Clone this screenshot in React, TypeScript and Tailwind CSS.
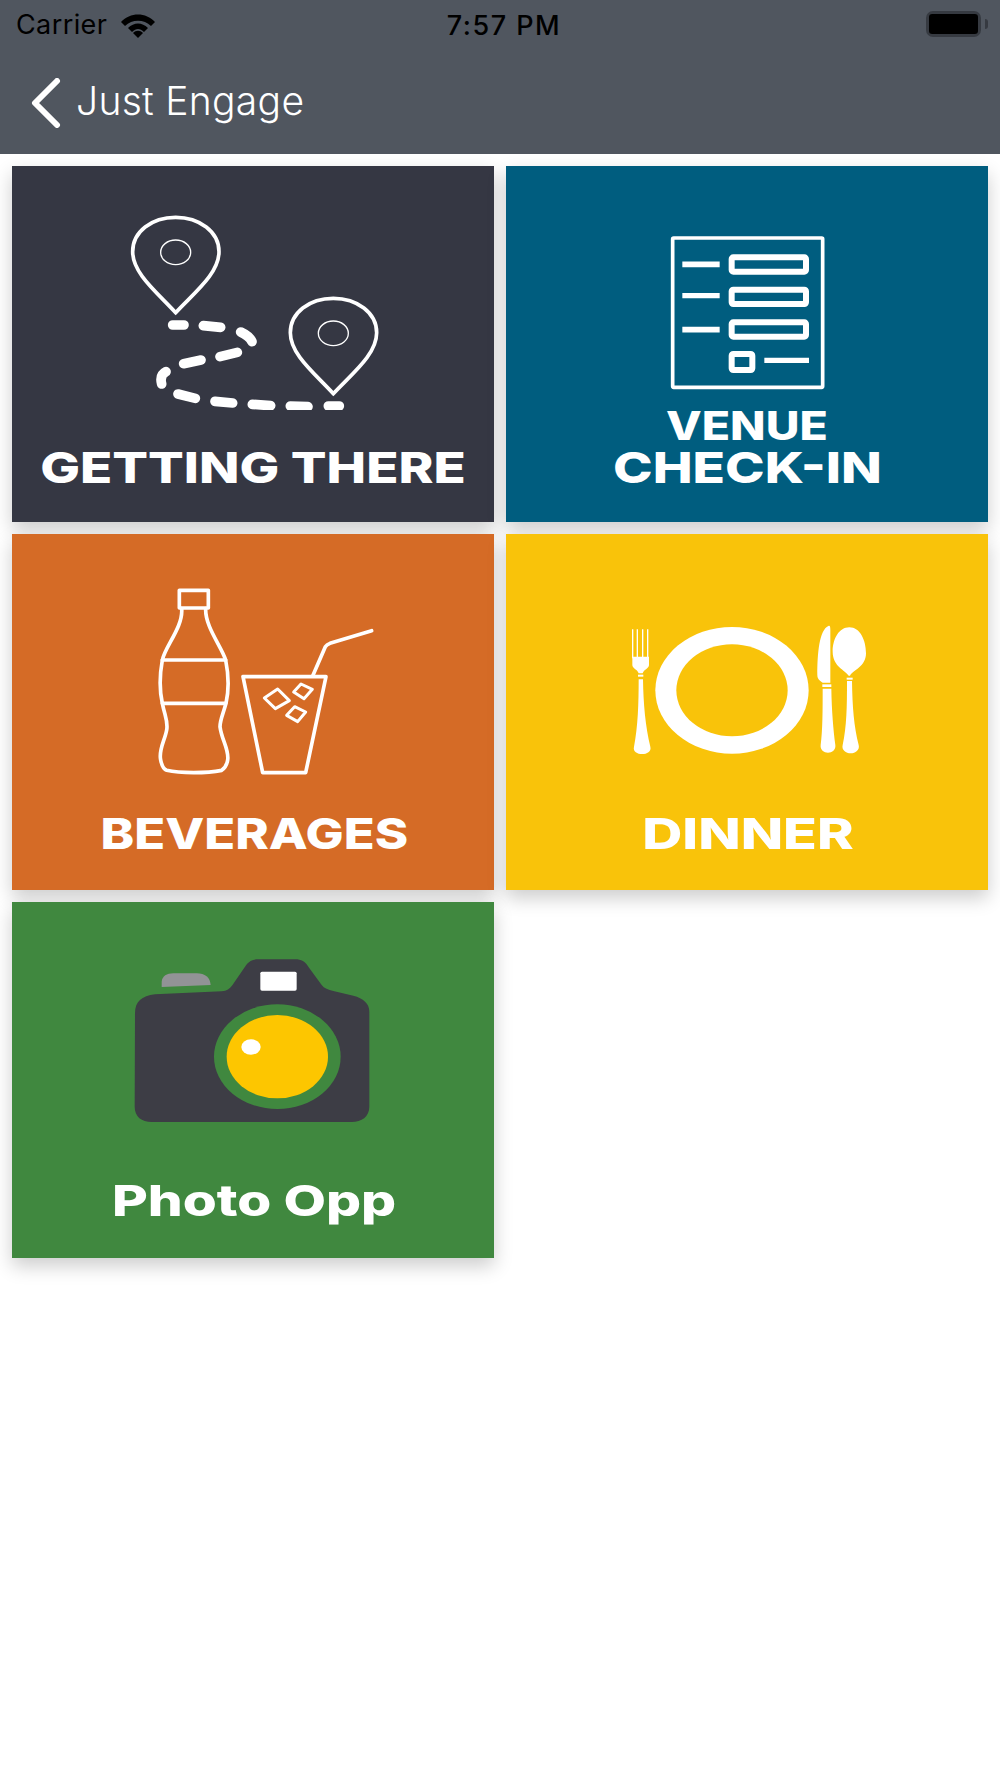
function PinIcon({ dx = 0, dy = 0 }: { dx?: number; dy?: number }) {
  return (
    <g transform={`translate(${dx} ${dy})`} fill="none" stroke="#fff">
      <path
        strokeWidth="11"
        d="M527 458C470 396 398 340 398 275C398 215 455 172 527 172C598 172 657 215 657 275C657 340 585 396 527 458Z"
      />
      <ellipse cx="527" cy="277" rx="45" ry="37" strokeWidth="4" />
    </g>
  );
}

function RouteIcon() {
  return (
    <svg viewBox="36 18 1446 732" className="w-full h-[244px] flex-none">
      <PinIcon />
      <PinIcon dx={473} dy={243} />
      <path
        fill="none"
        stroke="#fff"
        strokeWidth="29"
        strokeLinecap="round"
        d="M518 495L552 495M610 497L662 502M722 516Q748 528 756 545M660 590L712 577M551 611L603 600M498 635Q478 645 485 672M534 702L586 715M645 724L698 729M757 733L812 737M871 738L924 740M985 738L1018 738"
      />
    </svg>
  );
}

function FormIcon() {
  return (
    <svg viewBox="18 18 1446 732" className="w-full h-[244px] flex-none">
      <g fill="none" stroke="#fff">
        <rect x="518" y="234" width="450" height="448" rx="3" strokeWidth="11" />
        <path d="M547 313H659M547 509H659" strokeWidth="17" />
        <path d="M547 407H659M793 601H927" strokeWidth="16" />
        <g strokeWidth="18">
          <rect x="695" y="292" width="223" height="43" rx="5" />
          <rect x="695" y="389" width="223" height="43" rx="5" />
          <rect x="695" y="487" width="223" height="43" rx="5" />
          <rect x="695" y="582" width="62" height="48" rx="5" />
        </g>
      </g>
    </svg>
  );
}

function DrinksIcon() {
  return (
    <svg viewBox="36 12 1446 732" className="w-full h-[244px] flex-none">
      <g fill="none" stroke="#fff" strokeWidth="11" strokeLinejoin="round" strokeLinecap="round">
        <rect x="538" y="181" width="87" height="53" />
        <path d="M545 236C550 290 495 350 487 390C478 440 478 480 487 520C495 560 505 575 500 600C495 630 475 660 482 690C486 710 492 718 500 721C540 730 620 730 665 721C672 716 680 710 683 690C688 660 665 630 660 590C660 570 670 550 678 520C687 480 687 440 677 390C665 350 615 290 617 236" />
        <path d="M487 390H677M487 520H677" />
        <path d="M729 440H978L917 728H788Z" />
        <path d="M938 438L976 350Q980 344 990 340L1115 302" />
        <path strokeWidth="9" d="M793 504L833 477L868 512L826 536ZM881 486L903 462L937 478L912 506ZM860 556L884 530L917 546L893 575Z" />
      </g>
    </svg>
  );
}

function PlateIcon() {
  return (
    <svg viewBox="18 12 1446 732" className="w-full h-[244px] flex-none">
      <ellipse cx="696" cy="481" rx="230" ry="190" fill="#fff" />
      <ellipse cx="696" cy="481" rx="167" ry="138" fill="#f9c30a" />
      <path stroke="#fff" strokeWidth="4" d="M398 298V385M412 298V385M428 298V385M443 298V385" />
      <g fill="#fff">
        <path d="M397 380H447V405C447 415 430 420 428 430H416C414 420 397 415 397 405Z" />
        <rect x="414" y="434" width="16" height="6" />
        <path d="M416 448H429C430 520 436 590 451 650C455 665 440 672 427 672C412 672 398 665 402 650C414 590 416 520 416 448Z" />
        <path d="M985 288C990 285 991 290 991 300L991 458L968 458C960 452 952 448 952 435C952 370 958 300 985 288Z" />
        <rect x="967" y="463" width="27" height="8" />
        <path d="M968 476H994C995 540 1000 600 1006 645C1008 660 996 668 984 668C972 668 960 660 962 645C968 600 968 540 968 476Z" />
        <path d="M1048 292C1080 292 1098 330 1098 370C1098 410 1060 420 1050 437H1046C1036 420 998 410 998 365C998 325 1018 292 1048 292Z" />
        <rect x="1040" y="443" width="18" height="6" />
        <path d="M1041 453H1056C1057 530 1062 590 1076 645C1080 660 1066 670 1052 670C1038 670 1024 660 1028 645C1040 590 1041 530 1041 453Z" />
      </g>
    </svg>
  );
}

function CameraIcon() {
  return (
    <svg viewBox="36 36 1446 732" className="w-full h-[244px] flex-none">
      <path
        fill="#3d3d45"
        d="M405 370C405 335 425 318 465 313L665 304C680 303 690 296 697 286L735 230C745 215 755 208 775 208H885C905 208 915 215 925 230L965 285C972 295 985 300 1000 303L1060 317C1090 325 1108 340 1108 365V650C1108 680 1085 696 1055 696H455C425 696 404 680 404 650Z"
      />
      <rect x="781" y="245" width="109" height="57" rx="5" fill="#fff" />
      <path fill="#929396" d="M485 291V275C487 258 500 250 520 250H590C615 250 630 262 632 285Z" />
      <ellipse cx="832" cy="500" rx="190" ry="157" fill="#40883f" />
      <ellipse cx="832" cy="500" rx="152" ry="125" fill="#fdc600" />
      <ellipse cx="753" cy="471" rx="29" ry="23" fill="#fff" />
    </svg>
  );
}

function Tile({
  color,
  icon,
  children,
}: {
  color: string;
  icon: React.ReactNode;
  children: React.ReactNode;
}) {
  return (
    <div className={`h-[356px] flex flex-col shadow-[0_8px_18px_rgba(0,0,0,0.2)] ${color}`}>
      {icon}
      <div className="flex-1 min-h-0 flex flex-col justify-end items-center pb-[32px] text-white font-extrabold leading-[45px] whitespace-nowrap">
        {children}
      </div>
    </div>
  );
}

export default function App() {
  return (
    <div className="w-full min-h-[1778px] bg-white font-['Inter',sans-serif]">
      <header className="h-[154px] bg-[#50565f]">
        <div className="h-[51px] grid grid-cols-[1fr_auto_1fr] items-center pl-[16px] pr-[12px] text-black">
          <div className="flex items-center gap-[14px]">
            <span className="text-[27px] tracking-[0.4px]">Carrier</span>
            <svg viewBox="0 0 34 24" className="w-[34px] h-[24px]">
              <path d="M0 8C9-2 25-2 34 8L30 12C23 5 11 5 4 12Z" />
              <path d="M7 15C13 9 21 9 27 15L23 19C19 15 15 15 11 19Z" transform="translate(0 -1)" />
              <path d="M12 20C15 17 19 17 22 20L17 25Z" transform="translate(0 -1)" />
            </svg>
          </div>
          <span className="ml-[4px] mt-[1px] text-[27px] font-medium tracking-[1.5px]">7:57 PM</span>
          <div className="flex items-center justify-end mb-[3px]">
            <div className="w-[55px] h-[26px] rounded-[7px] border-[3px] border-[#363a41]">
              <div className="w-full h-full rounded-[3px] bg-black" />
            </div>
            <div className="ml-[4px] w-[3px] h-[10px] rounded-r-full bg-[#363a41]" />
          </div>
        </div>
        <div className="h-[103px] flex items-center pl-[30px]">
          <svg viewBox="0 0 32 50" className="w-[32px] h-[50px]">
            <path d="M27 3L5 25L27 47" fill="none" stroke="#fff" strokeWidth="6" strokeLinecap="round" strokeLinejoin="round" />
          </svg>
          <span className="ml-[14px] mb-[2px] text-white text-[39px] font-light tracking-[0.3px]">Just Engage</span>
        </div>
      </header>
      <main className="grid grid-cols-2 gap-3 px-3 pt-3">
        <Tile color="bg-[#353743]" icon={<RouteIcon />}>
          <span className="text-[43px] scale-x-[1.23]">GETTING THERE</span>
        </Tile>
        <Tile color="bg-[#005d7f]" icon={<FormIcon />}>
          <span className="text-[39px] leading-[40px] scale-x-[1.19]">VENUE</span>
          <span className="text-[43px] leading-[42px] mb-[2px] scale-x-[1.24]">CHECK-IN</span>
        </Tile>
        <Tile color="bg-[#d56b26]" icon={<DrinksIcon />}>
          <span className="text-[43px] mb-[2px] ml-[2px] scale-x-[1.18]">BEVERAGES</span>
        </Tile>
        <Tile color="bg-[#f9c30a]" icon={<PlateIcon />}>
          <span className="text-[43px] mb-[2px] ml-[2px] scale-x-[1.29]">DINNER</span>
        </Tile>
        <Tile color="bg-[#40883f]" icon={<CameraIcon />}>
          <span className="text-[43px] mb-[3px] ml-[2px] scale-x-[1.28]">Photo Opp</span>
        </Tile>
      </main>
    </div>
  );
}
